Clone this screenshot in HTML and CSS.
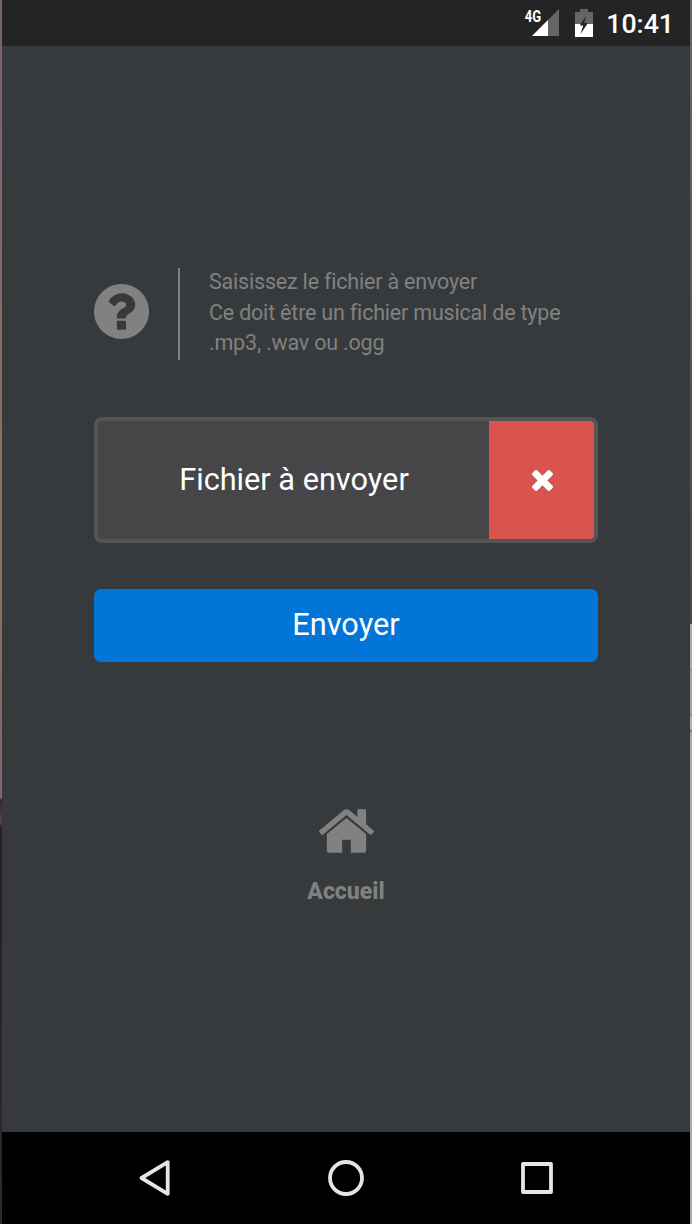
FILE: index.html
```html
<!DOCTYPE html>
<html lang="fr">
<head>
<meta charset="utf-8">
<title>Envoyer un fichier</title>
<link rel="stylesheet" href="styles.css">
</head>
<body>
<div class="edge edge-left"></div>
<div class="screen">
  <header class="status">
    <svg class="signal" viewBox="0 0 36 30" width="36" height="30">
      <path d="M8 28 35 1V28z" fill="#666"/>
      <path d="M8 28 24 12V28z" fill="#fff"/>
      <text class="network" x="0.8" y="13.500" textLength="16.4" lengthAdjust="spacingAndGlyphs">4G</text>
    </svg>
    <svg class="battery" viewBox="0 0 18 28" width="18" height="28">
      <path d="M5 0h8v3h5v12H0V3h5z" fill="#666"/>
      <path d="M0 15h18v13H0z" fill="#fff"/>
      <path d="M11.5 6.5 4.7 16.5H8.2L5.4 25.3 13 14H9.2z" fill="#242424"/>
    </svg>
    <span class="clock">10:41</span>
  </header>
  <main class="content">
    <section class="help">
      <svg class="help-icon" viewBox="128 128 1536 1536"><path d="M1024 1376v-192q0-14-9-23t-23-9h-192q-14 0-23 9t-9 23v192q0 14 9 23t23 9h192q14 0 23-9t9-23zm256-672q0-88-55.500-163t-138.500-116-170-41q-243 0-371 213-15 24 8 42l132 100q7 6 19 6 16 0 25-12 53-68 86-92 34-24 86-24 48 0 85.500 26t37.500 59q0 38-20 61t-68 45q-63 28-115.500 86.500t-52.500 125.500v36q0 14 9 23t23 9h192q14 0 23-9t9-23q0-19 21.500-49.500t54.500-49.500q32-18 49-28.500t46-35 44.500-48 28-60.500 12.500-81zm384 192q0 209-103 385.500t-279.500 279.500-385.500 103-385.500-103-279.500-279.500-103-385.500 103-385.500 279.500-279.500 385.500-103 385.500 103 279.500 279.500 103 385.500z"/></svg>
      <div class="help-body">
        <p class="help-text">Saisissez le fichier à envoyer<br>Ce doit être un fichier musical de type<br>.mp3, .wav ou .ogg</p>
      </div>
    </section>
    <div class="picker">
      <button class="picker-file">Fichier à envoyer</button>
      <button class="picker-clear" aria-label="Effacer">
        <svg class="clear-icon" viewBox="302 366 1188 1188"><path d="M1490 1322q0 40-28 68l-136 136q-28 28-68 28t-68-28l-294-294-294 294q-28 28-68 28t-68-28l-136-136q-28-28-28-68t28-68l294-294-294-294q-28-28-28-68t28-68l136-136q28-28 68-28t68 28l294 294 294-294q28-28 68-28t68 28l136 136q28 28 28 68t-28 68l-294 294 294 294q28 28 28 68z"/></svg>
      </button>
    </div>
    <button class="send">Envoyer</button>
    <a class="home">
      <svg class="home-icon" viewBox="89 253 1614 1283"><path d="M1472 992v480q0 26-19 45t-45 19h-384v-384h-256v384h-384q-26 0-45-19t-19-45v-480q0-1 .5-3t.5-3l575-474 575 474q1 2 1 6zm223-69l-62 74q-8 9-21 11h-3q-13 0-21-7l-692-577-692 577q-12 8-24 7-13-2-21-11l-62-74q-8-10-7-23.500t11-21.500l719-599q32-26 76-26t76 26l244 204v-195q0-14 9-23t23-9h192q14 0 23 9t9 23v408l219 182q10 8 11 21.500t-7 23.500z"/></svg>
      <span class="home-label">Accueil</span>
    </a>
  </main>
  <nav class="navbar">
    <svg class="nav-icon" viewBox="0 0 40 40"><path d="M6.500 20 32.700 4.200V35.800z"/></svg>
    <svg class="nav-icon" viewBox="0 0 40 40"><circle cx="20" cy="20" r="16"/></svg>
    <svg class="nav-icon" viewBox="0 0 40 40"><rect x="6" y="6" width="28" height="28"/></svg>
  </nav>
</div>
<div class="edge edge-right"></div>
</body>
</html>
```

FILE: styles.css
```css
* { box-sizing: border-box; }
body {
  margin: 0;
  display: flex;
  height: 1224px;
  overflow: hidden;
  background: #000;
  font-family: Roboto, "Liberation Sans", sans-serif;
  font-variant-ligatures: none;
}
button {
  margin: 0;
  padding: 0;
  border: 0;
  color: #fff;
  font: inherit;
}
svg { display: block; flex: none; }
.edge { width: 2px; flex: none; }
.edge-left { background: linear-gradient(#75636a 0, #876a67 300px, #946c60 550px, #80666a 798px, #30252b 800px, #55434a 822px, #2b1d26 828px, #33252c 1224px); }
.edge-right { background: linear-gradient(#75616c 0, #59434b 624px, #a9a9a9 624px, #a9a9a9 668px, #858585 669px, #a2a2a2 671px, #a2a2a2 714px, #858585 715px, #b4b4b4 717px, #b4b4b4 729px, #a77d4b 730px, #a77d4b 732px, #aaa 733px, #aaa 1224px); }
.screen {
  flex: 1;
  display: flex;
  flex-direction: column;
  background: #373a3c;
}
.status {
  height: 46px;
  flex: none;
  display: flex;
  justify-content: flex-end;
  align-items: flex-start;
  padding: 8px 16px 0 0;
  background: #242424;
  color: #fff;
}
.signal { overflow: visible; margin-right: 15px; }
.network { fill: #fff; font-size: 16.500px; font-weight: 700; }
.battery { margin: 1px 13.500px 0 0; }
.clock { font-size: 26.700px; font-weight: 500; line-height: 33px; }
.content {
  flex: 1;
  display: flex;
  flex-direction: column;
  padding: 222px 92px 0;
}
.help { display: flex; align-items: center; height: 92px; color: #818181; }
.help-icon { width: 55px; height: 55px; margin: -5px 29px 0 0; fill: #818181; }
.help-body {
  display: flex;
  height: 92px;
  padding-left: 29px;
  border-left: 2px solid #818181;
}
.help-text {
  margin: -1px 0 0;
  font-size: 21.500px;
  letter-spacing: -0.200px;
  line-height: 30.500px;
  white-space: nowrap;
}
.picker {
  display: flex;
  height: 126px;
  margin-top: 57px;
  border: 4px solid #555;
  border-radius: 8px;
  background: #464648;
  overflow: hidden;
}
.picker-file { flex: 1; padding: 0 0 2px 1px; background: #464648; font-size: 30.700px; }
.picker-clear { width: 105px; display: flex; align-items: center; justify-content: center; padding: 0 0 0 1px; background: #d9534f; }
.clear-icon { width: 21px; height: 21px; fill: #fff; }
.send {
  height: 73px;
  margin-top: 46px;
  padding-bottom: 2px;
  border-radius: 7px;
  background: #0275d8;
  font-size: 30.700px;
}
.home { display: flex; flex-direction: column; align-items: center; margin-top: 147px; color: #818181; }
.home-icon { width: 55px; height: 44px; fill: #818181; }
.home-label { margin-top: 23px; font-size: 23px; font-weight: 800; line-height: 32px; }
.navbar {
  height: 92px;
  flex: none;
  display: flex;
  justify-content: center;
  align-items: center;
  gap: 151px;
  background: #000;
}
.nav-icon { width: 40px; height: 40px; fill: none; stroke: #e5e5e5; stroke-width: 3.800; stroke-linejoin: round; }
```
